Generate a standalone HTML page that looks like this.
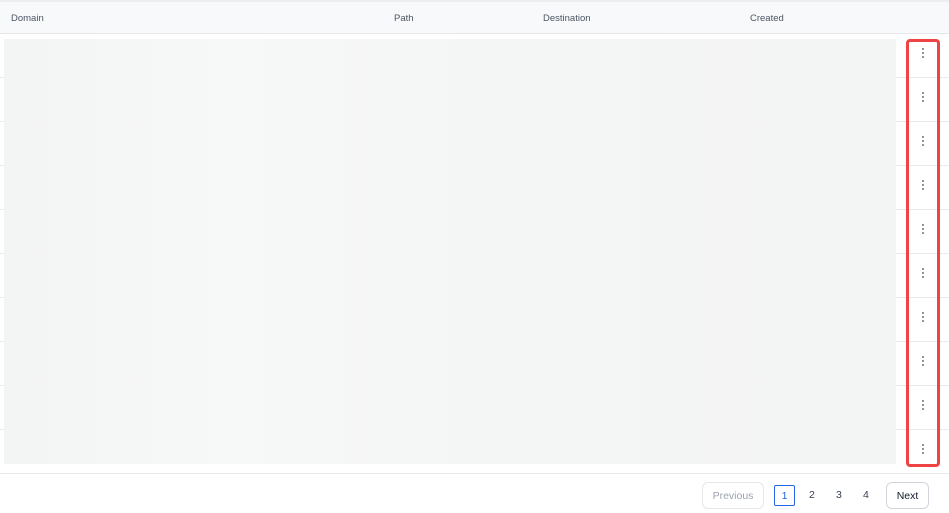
<!DOCTYPE html>
<html><head><style>
*{margin:0;padding:0;box-sizing:border-box}
body{width:949px;height:513px;background:#fff;font-family:"Liberation Sans",sans-serif;position:relative;overflow:hidden}
.abs{position:absolute}
.hdr{left:0;top:0;width:949px;height:34px;background:#f8f9fb;border-top:2px solid #eceef1;border-bottom:1px solid #e5e7eb}
.hdr span{position:absolute;top:11px;font-size:9.5px;color:#4b5563}
.line{left:0;width:949px;height:1px;background:#e8eaed}
.skel{left:4px;top:39px;width:892px;height:425px;background:linear-gradient(90deg,#f3f4f4 0%,#f7f8f8 25%,#f5f6f6 45%,#f4f5f5 60%,#f3f4f4 100%)}
.red{left:906px;top:39px;width:34px;height:428px;border:3px solid #ef4444;border-radius:4px}
.dots{left:922px;width:3px}
.dots i{display:block;width:2px;height:2px;background:#6b7280;border-radius:1px;margin-bottom:2px}
.btn{border:1px solid #e5e7eb;border-radius:6px;font-size:10.5px;display:flex;align-items:center;justify-content:center}
.pg{font-size:10.5px;color:#374151}
</style></head><body>
<div class="abs hdr"><span style="left:11px">Domain</span><span style="left:394px">Path</span><span style="left:543px">Destination</span><span style="left:750px">Created</span></div>
<div class="abs line" style="top:77px"></div>
<div class="abs line" style="top:121px"></div>
<div class="abs line" style="top:165px"></div>
<div class="abs line" style="top:209px"></div>
<div class="abs line" style="top:253px"></div>
<div class="abs line" style="top:297px"></div>
<div class="abs line" style="top:341px"></div>
<div class="abs line" style="top:385px"></div>
<div class="abs line" style="top:429px"></div>
<div class="abs line" style="top:473px"></div>
<div class="abs skel"></div>
<div class="abs red"></div>
<div class="abs dots" style="top:48px"><i></i><i></i><i></i></div>
<div class="abs dots" style="top:92px"><i></i><i></i><i></i></div>
<div class="abs dots" style="top:136px"><i></i><i></i><i></i></div>
<div class="abs dots" style="top:180px"><i></i><i></i><i></i></div>
<div class="abs dots" style="top:224px"><i></i><i></i><i></i></div>
<div class="abs dots" style="top:268px"><i></i><i></i><i></i></div>
<div class="abs dots" style="top:312px"><i></i><i></i><i></i></div>
<div class="abs dots" style="top:356px"><i></i><i></i><i></i></div>
<div class="abs dots" style="top:400px"><i></i><i></i><i></i></div>
<div class="abs dots" style="top:444px"><i></i><i></i><i></i></div>
<div class="abs btn" style="left:702px;top:482px;width:62px;height:27px;color:#9ca3af">Previous</div>
<div class="abs btn" style="left:774px;top:485px;width:21px;height:21px;border-color:#2563eb;border-radius:2px;color:#2563eb">1</div>
<div class="abs pg" style="left:809px;top:489px">2</div>
<div class="abs pg" style="left:836px;top:489px">3</div>
<div class="abs pg" style="left:863px;top:489px">4</div>
<div class="abs btn" style="left:886px;top:482px;width:43px;height:27px;color:#111827;border-color:#d1d5db">Next</div>
</body></html>
